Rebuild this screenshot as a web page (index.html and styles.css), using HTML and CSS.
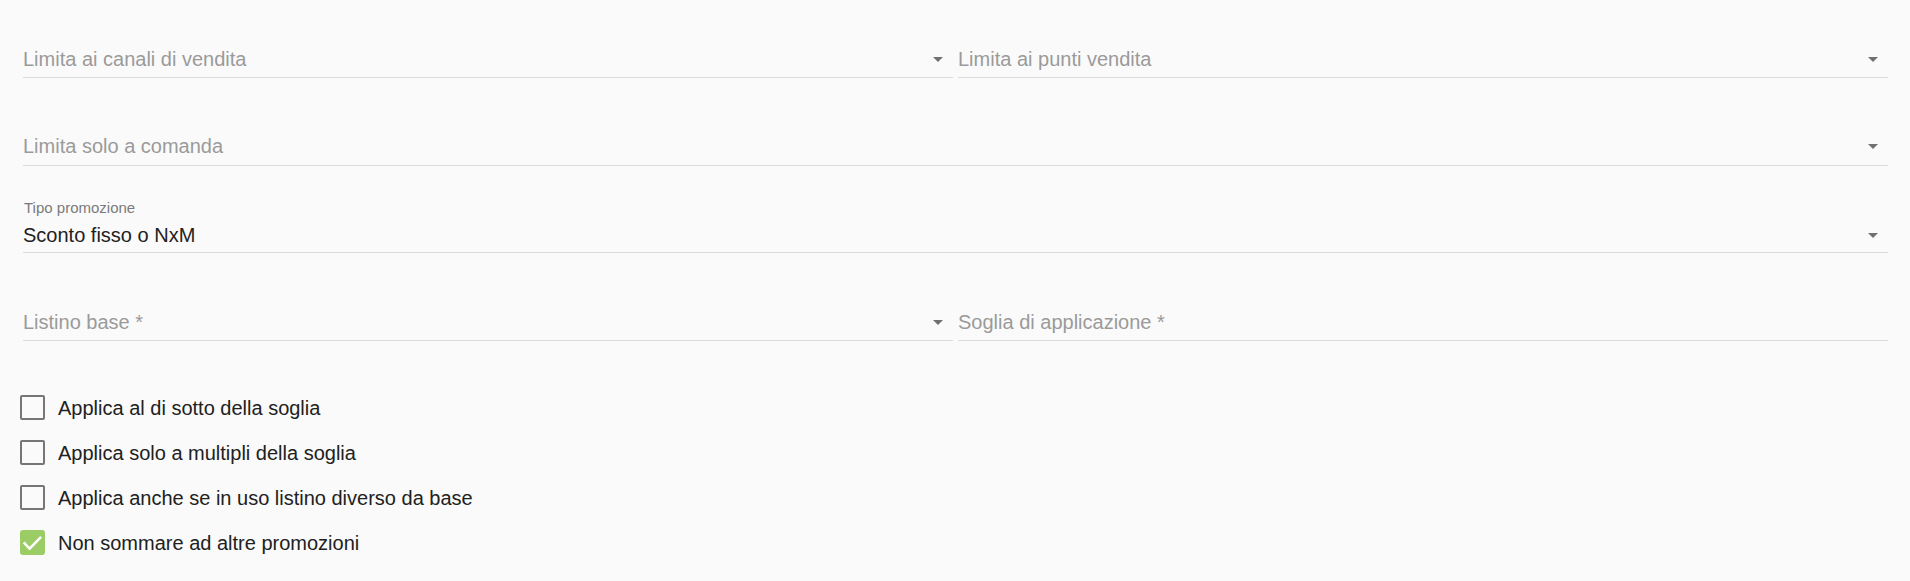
FILE: index.html
```html
<!DOCTYPE html>
<html lang="it">
<head>
<meta charset="utf-8">
<title>Promozione</title>
<link rel="stylesheet" href="styles.css">
</head>
<body>
<form class="form">
  <div class="row">
    <div class="field">
      <div class="control">
        <span class="placeholder">Limita ai canali di vendita</span>
        <span class="arrow"></span>
      </div>
    </div>
    <div class="field">
      <div class="control">
        <span class="placeholder">Limita ai punti vendita</span>
        <span class="arrow"></span>
      </div>
    </div>
  </div>
  <div class="row">
    <div class="field">
      <div class="control">
        <span class="placeholder">Limita solo a comanda</span>
        <span class="arrow"></span>
      </div>
    </div>
  </div>
  <div class="row">
    <div class="field">
      <div class="float-label">Tipo promozione</div>
      <div class="control control-value">
        <span class="value">Sconto fisso o NxM</span>
        <span class="arrow"></span>
      </div>
    </div>
  </div>
  <div class="row">
    <div class="field">
      <div class="control">
        <span class="placeholder">Listino base *</span>
        <span class="arrow"></span>
      </div>
    </div>
    <div class="field">
      <div class="control">
        <span class="placeholder">Soglia di applicazione *</span>
      </div>
    </div>
  </div>

  <div class="checks">
    <label class="check">
      <span class="box"></span>
      <span class="check-label">Applica al di sotto della soglia</span>
    </label>
    <label class="check">
      <span class="box"></span>
      <span class="check-label">Applica solo a multipli della soglia</span>
    </label>
    <label class="check">
      <span class="box"></span>
      <span class="check-label">Applica anche se in uso listino diverso da base</span>
    </label>
    <label class="check">
      <span class="box box-checked">
        <svg viewBox="0 0 25 25" width="25" height="25" aria-hidden="true"><path d="M4.6 13.4 L9.6 18.6 L20.2 7.8" fill="none" stroke="#ffffff" stroke-width="2.6" stroke-linecap="square"/></svg>
      </span>
      <span class="check-label">Non sommare ad altre promozioni</span>
    </label>
  </div>
</form>
</body>
</html>
```

FILE: styles.css
```css
html, body {
  margin: 0;
  padding: 0;
  background: #fafafa;
}

body {
  font-family: "Liberation Sans", Arial, sans-serif;
  font-size: 20px;
  color: #212121;
  width: 1910px;
  height: 581px;
  overflow: hidden;
}

.form {
  padding: 0 22px 0 23px;
}

.row {
  display: flex;
  gap: 5px;
}

.field {
  flex: 1 1 0;
  height: 87.7px;
  box-sizing: border-box;
  padding-bottom: 9.7px;
  display: flex;
  flex-direction: column;
  justify-content: flex-end;
}

.control {
  display: flex;
  align-items: center;
  border-bottom: 1px solid #dcdcdc;
  padding-bottom: 7px;
  line-height: 22.5px;
}

.control-value {
  padding-bottom: 6px;
}

.placeholder {
  flex: 1;
  color: #9a9a9a;
}

.value {
  flex: 1;
  color: #222222;
}

.float-label {
  font-size: 15px;
  line-height: 15px;
  color: #7a7a7a;
  margin-bottom: 9px;
  padding-left: 1px;
}

.arrow {
  width: 0;
  height: 0;
  border-left: 5px solid transparent;
  border-right: 5px solid transparent;
  border-top: 5px solid #707070;
  margin-right: 10px;
  margin-top: 1px;
}

.checks {
  margin-top: 34.7px;
  display: flex;
  flex-direction: column;
}

.check {
  display: flex;
  align-items: center;
  height: 45px;
  gap: 13px;
  padding-left: 20px;
  margin-left: -23px;
  cursor: pointer;
}

.box {
  width: 25px;
  height: 25px;
  box-sizing: border-box;
  border: 2.5px solid #767676;
  border-radius: 2px;
  flex: none;
  position: relative;
}

.box-checked {
  border: none;
  background: #9ccc65;
  border-radius: 3px;
}

.box-checked svg {
  display: block;
}

.check-label {
  line-height: 22.5px;
  color: #212121;
}
```
